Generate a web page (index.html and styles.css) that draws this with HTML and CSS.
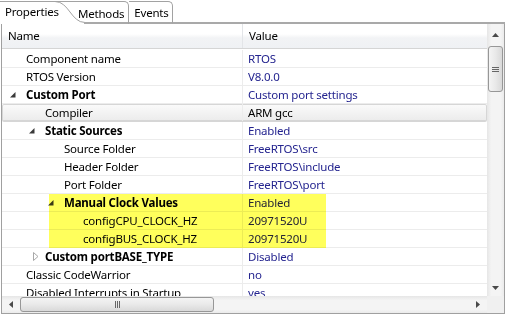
FILE: index.html
```html
<!DOCTYPE html>
<html lang="en">
<head>
    <meta charset="UTF-8">
    <title>Properties</title>
    <link rel="stylesheet" href="styles.css">
</head>
<body>
    <div class="panel">
        <div class="tabs">
            <div class="tab active">
                <span class="tab-label">Properties</span>
                <svg class="tab-curve" width="30" height="24" viewBox="0 0 30 24">
                    <path d="M0 1.5 C14 1.5 16 22.5 30 22.5" fill="none" stroke="#a2a2a2"/>
                </svg>
            </div>
            <div class="tab methods">Methods</div>
            <div class="tab events">Events</div>
            <div class="tab-fill"></div>
        </div>

        <div class="frame">
            <div class="main">
                <div class="grid">
                    <div class="head">
                        <div class="hcell name-col">Name</div>
                        <div class="hcell">Value</div>
                    </div>
                    <div class="rows">
                        <div class="row"><div class="name l0"><span class="exp"></span>Component name</div><div class="val">RTOS</div></div>
                        <div class="row"><div class="name l0"><span class="exp"></span>RTOS Version</div><div class="val">V8.0.0</div></div>
                        <div class="row group"><div class="name l0"><span class="exp"><svg width="6" height="6"><path d="M5.5 0 L5.5 5.5 L0 5.5 Z" fill="#3a3a3a"/></svg></span>Custom Port</div><div class="val">Custom port settings</div></div>
                        <div class="row sel"><div class="name l1"><span class="exp"></span>Compiler</div><div class="val">ARM gcc</div></div>
                        <div class="row group"><div class="name l1"><span class="exp"><svg width="6" height="6"><path d="M5.5 0 L5.5 5.5 L0 5.5 Z" fill="#3a3a3a"/></svg></span>Static Sources</div><div class="val">Enabled</div></div>
                        <div class="row"><div class="name l2"><span class="exp"></span>Source Folder</div><div class="val">FreeRTOS\src</div></div>
                        <div class="row"><div class="name l2"><span class="exp"></span>Header Folder</div><div class="val">FreeRTOS\include</div></div>
                        <div class="row"><div class="name l2"><span class="exp"></span>Port Folder</div><div class="val">FreeRTOS\port</div></div>
                        <div class="row group"><div class="name l2"><span class="exp"><svg width="6" height="6"><path d="M5.5 0 L5.5 5.5 L0 5.5 Z" fill="#3a3a3a"/></svg></span>Manual Clock Values</div><div class="val">Enabled</div></div>
                        <div class="row"><div class="name l3"><span class="exp"></span>configCPU_CLOCK_HZ</div><div class="val">20971520U</div></div>
                        <div class="row"><div class="name l3"><span class="exp"></span>configBUS_CLOCK_HZ</div><div class="val">20971520U</div></div>
                        <div class="row group"><div class="name l1"><span class="exp closed"><svg width="6" height="9"><path d="M0.5 0.5 L5 4.5 L0.5 8.5 Z" fill="none" stroke="#a8a8a8"/></svg></span>Custom portBASE_TYPE</div><div class="val">Disabled</div></div>
                        <div class="row"><div class="name l0"><span class="exp"></span>Classic CodeWarrior</div><div class="val">no</div></div>
                        <div class="row"><div class="name l0"><span class="exp"></span>Disabled Interrupts in Startup</div><div class="val">yes</div></div>
                        <div class="highlight"></div>
                    </div>
                </div>

                <div class="vscroll">
                    <div class="sbtn up"><svg width="7" height="4"><path d="M0 4 L3.5 0 L7 4 Z" fill="#4a4a4a"/></svg></div>
                    <div class="vthumb">
                        <div class="grip-v"></div>
                    </div>
                    <div class="vtrack"></div>
                    <div class="sbtn down"><svg width="7" height="4"><path d="M0 0 L7 0 L3.5 4 Z" fill="#4a4a4a"/></svg></div>
                </div>
            </div>

            <div class="hbar">
                <div class="hscroll">
                    <div class="sbtn left"><svg width="4" height="7"><path d="M4 0 L4 7 L0 3.5 Z" fill="#4a4a4a"/></svg></div>
                    <div class="hthumb">
                        <div class="grip-h"></div>
                    </div>
                    <div class="htrack"></div>
                    <div class="sbtn right"><svg width="4" height="7"><path d="M0 0 L4 3.5 L0 7 Z" fill="#4a4a4a"/></svg></div>
                </div>
                <div class="corner"></div>
            </div>
        </div>
    </div>
</body>
</html>
```

FILE: styles.css
```css
body { margin: 0; font-family: "Noto Sans", "Open Sans", sans-serif; font-size: 11.5px; letter-spacing: -0.2px; color: #000; background: #fff; }
.panel { width: 505px; }

/* tab strip */
.tabs { display: flex; height: 24px; }
.tab { display: flex; align-items: center; height: 24px; box-sizing: border-box; white-space: nowrap; }
.tab.active { align-items: stretch; }
.tab-label { display: flex; align-items: center; width: 55px; padding: 0 0 2px 5px; margin-top: 1px; border-top: 1px solid #a2a2a2; height: 22px; box-sizing: border-box; }
.tab-curve { display: block; flex: none; }
.methods { margin-left: -30px; padding: 1px 4px 1px 23px; border-top: 1px solid #a2a2a2; border-right: 1px solid #a2a2a2; border-top-right-radius: 5px;
    background: linear-gradient(#a9a9a9, #a9a9a9) no-repeat 29px 100% / calc(100% - 29px) 2px; margin-top: 1px; height: 23px; }
.events { padding: 1px 3px 1px 5px; border-top: 1px solid #a2a2a2; border-right: 1px solid #a2a2a2; border-top-right-radius: 5px; margin-top: 1px; height: 23px;
    border-bottom: 2px solid #a9a9a9; }
.tab-fill { flex: 1; border-bottom: 2px solid #a9a9a9; }

/* frame */
.frame { margin-left: 1px; width: 504px; box-sizing: border-box; border: 1px solid #a0a0a0; border-top: none; display: flex; flex-direction: column; height: 290px; }
.main { display: flex; height: 272px; }
.grid { flex: 1; overflow: hidden; }

.head { display: flex; height: 25px; box-sizing: border-box; border-bottom: 1px solid #d5d5d5;
    background: linear-gradient(#fff 0, #fff 42%, #f2f3f5 58%, #eff1f4 100%); }
.hcell { display: flex; align-items: center; padding-left: 6px; padding-bottom: 1px; }
.name-col { width: 241px; box-sizing: border-box; border-right: 1px solid #e3e5e8; }

.rows { position: relative; padding-top: 1px; }
.row { display: flex; height: 18px; box-sizing: border-box; border-bottom: 1px solid #ececec; line-height: 17px; }
.name { width: 241px; box-sizing: border-box; border-right: 1px solid #ececec; display: flex; align-items: center; white-space: nowrap; }
.val { padding-left: 5px; color: #24248f; white-space: nowrap; }
.exp { width: 19px; flex: none; display: flex; align-items: center; padding-left: 3px; box-sizing: border-box; }
.exp.closed { padding-left: 7px; }
.exp svg { display: block; }
.group .name { font-weight: bold; }
.l0 { padding-left: 5px; }
.l1 { padding-left: 24px; }
.l2 { padding-left: 43px; }
.l3 { padding-left: 62px; }

.sel { background: linear-gradient(#fbfbfb, #ebebeb); box-shadow: inset 0 0 0 1px #d6d6d6; border-radius: 2px; border-bottom-color: #d6d6d6; }
.sel .val { color: #000; }

/* annotation drawn over the rows */
.highlight { position: absolute; left: 47px; top: 145px; width: 277px; height: 54px; background: #ffff5c; mix-blend-mode: multiply; }

/* scrollbars */
.sbtn { display: flex; align-items: center; justify-content: center; flex: none; }
.sbtn svg { display: block; }
.vscroll { width: 17px; display: flex; flex-direction: column; background: linear-gradient(to right, #e6e6e6, #f4f4f4 25%, #f4f4f4 80%, #ebebeb); }
.up { height: 20px; padding-top: 2px; box-sizing: border-box; }
.down { height: 17px; }
.vthumb { margin: 2px 1px 0 1px; height: 46px; box-sizing: border-box; border: 1px solid #979797; border-radius: 3px;
    background: linear-gradient(to right, #f4f4f4, #e9e9e9 50%, #d9d9d9); display: flex; align-items: center; justify-content: center; }
.grip-v { width: 7px; height: 5px; border-top: 1px solid #666; border-bottom: 1px solid #666; box-sizing: border-box;
    background: linear-gradient(#666, #666) no-repeat 0 1px / 7px 1px; }
.vtrack { flex: 1; }

.hbar { display: flex; height: 17px; }
.hscroll { flex: 1; display: flex; background: linear-gradient(#e6e6e6, #f4f4f4 25%, #f4f4f4 80%, #ebebeb); }
.left { width: 17px; }
.right { width: 17px; padding-right: 2px; box-sizing: border-box; }
.hthumb { margin: 1px 0 1px 1px; width: 194px; box-sizing: border-box; border: 1px solid #979797; border-radius: 3px;
    background: linear-gradient(#f4f4f4, #e9e9e9 50%, #d9d9d9); display: flex; align-items: center; justify-content: center; }
.grip-h { width: 5px; height: 7px; border-left: 1px solid #666; border-right: 1px solid #666; box-sizing: border-box;
    background: linear-gradient(#666, #666) no-repeat 1px 0 / 1px 7px; }
.htrack { flex: 1; }
.corner { width: 17px; background: #f0f0f0; }
```
